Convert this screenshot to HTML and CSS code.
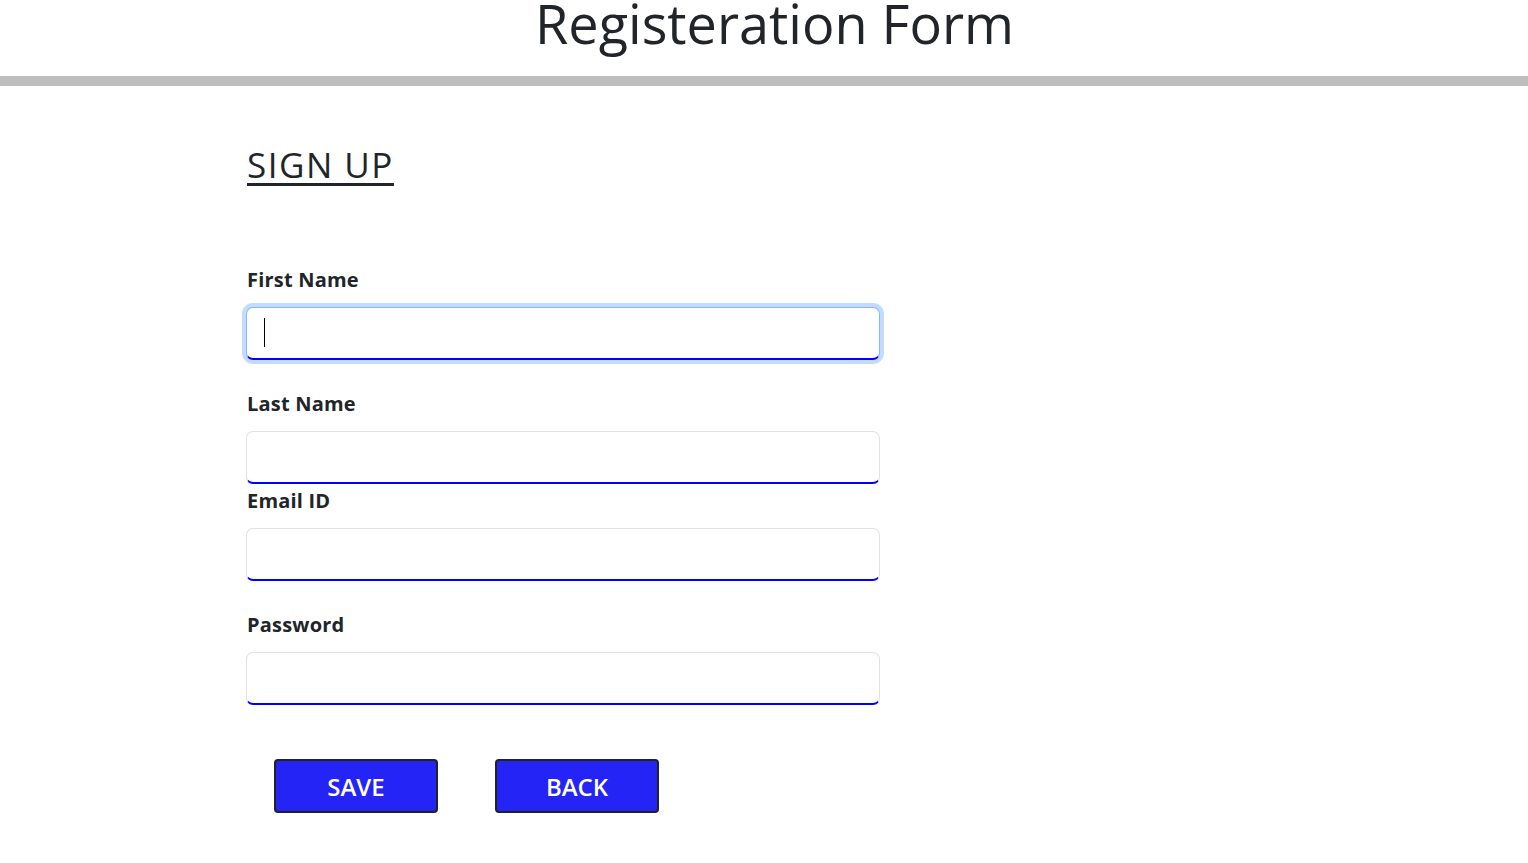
FILE: index.html
```html
<!DOCTYPE html>
<html lang="en">
<head>
    <meta charset="UTF-8">
    <meta name="viewport" content="width=device-width, initial-scale=1.0">
    <link rel="stylesheet" href="styles.css">
    <title>Registeration Form</title>
</head>
<body>
    <header class="page-header">
        <h1>Registeration Form</h1>
    </header>
    <div class="form-container">
        <h2 class="signup-title">SIGN UP</h2>
        <form class="signup-form">
            <div class="field">
                <label for="firstName">First Name</label>
                <div class="input-wrap">
                    <input type="text" id="firstName" class="focused">
                    <span class="caret"></span>
                </div>
            </div>
            <div class="field">
                <label for="lastName">Last Name</label>
                <input type="text" id="lastName">
            </div>
            <div class="field field-tight">
                <label for="email">Email ID</label>
                <input type="email" id="email">
            </div>
            <div class="field">
                <label for="password">Password</label>
                <input type="password" id="password">
            </div>
            <div class="button-row">
                <button type="submit" class="form-button">SAVE</button>
                <button type="button" class="form-button" onclick="history.back();">BACK</button>
            </div>
        </form>
    </div>
</body>
</html>
```

FILE: styles.css
```css
body {
    font-family: "Open Sans", "Noto Sans", sans-serif;
    margin: 0;
    padding: 0;
    color: #212529;
    background-color: #fff;
}
.page-header {
    text-align: center;
    border-bottom: 10px solid #bebebe;
    padding: 0 0 26px 21px;
}
.page-header h1 {
    margin: -4px 0 0 0;
    font-size: 54px;
    font-weight: 500;
    line-height: 1;
}
.form-container {
    margin-left: 246px;
    width: 634px;
    padding-top: 58px;
}
.signup-title {
    margin: 0 0 80px 1px;
    font-size: 35px;
    font-weight: 400;
    letter-spacing: 1.5px;
    line-height: 1.2;
    text-decoration: underline;
    text-underline-offset: 5px;
    text-decoration-thickness: 3px;
}
.field {
    margin-bottom: 30px;
}
.field label {
    display: block;
    margin: 0 0 14px 1px;
    font-size: 20px;
    font-weight: 700;
    letter-spacing: 0.2px;
}
.input-wrap {
    position: relative;
}
.field input {
    box-sizing: border-box;
    display: block;
    width: 634px;
    height: 53px;
    padding: 6px 16px;
    font-family: inherit;
    font-size: 18px;
    border: 1px solid #dee2e6;
    border-bottom: 2px solid #0000ff;
    border-radius: 7px;
    outline: none;
}
.field input.focused {
    border-color: #86b7fe;
    border-bottom-color: #0000ff;
    box-shadow: 0 0 0 4px rgba(13, 110, 253, 0.25);
}
.caret {
    position: absolute;
    left: 18px;
    top: 11px;
    width: 1px;
    height: 29px;
    background-color: #000;
}
.field-tight {
    margin-top: -30px;
    padding-top: 3px;
}
.button-row {
    display: flex;
    gap: 57px;
    padding: 24px 0 0 28px;
}
.form-button {
    width: 164px;
    height: 54px;
    background-color: #2424f6;
    color: #fff;
    font-family: inherit;
    font-size: 24px;
    font-weight: 600;
    border: 2px solid #222;
    border-radius: 4px;
    cursor: pointer;
}
.form-button:hover {
    background-color: #1a1ad0;
}
```
